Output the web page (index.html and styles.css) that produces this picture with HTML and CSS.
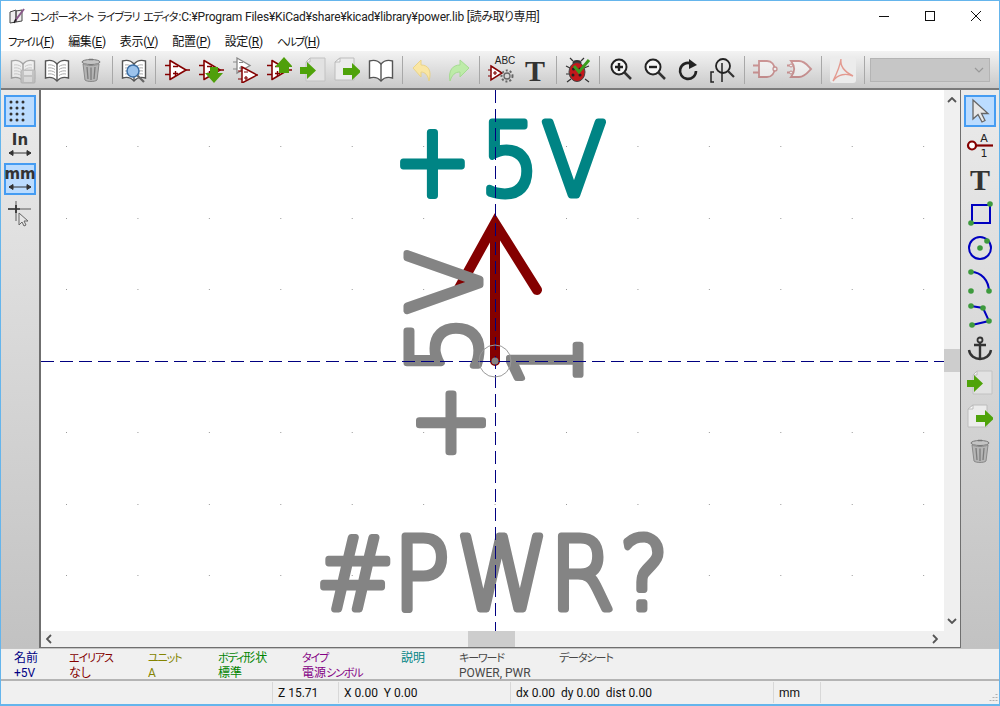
FILE: index.html
```html
<!DOCTYPE html>
<html lang="ja">
<head>
  <meta charset="UTF-8" />
  <title>コンポーネント ライブラリ エディタ</title>
  <link rel="stylesheet" href="styles.css">
</head>
<body>
  <!-- shared toolbar icons -->
  <svg class="defs" width="0" height="0">
    <defs>
      <symbol id="i-book" viewBox="0 0 26 26">
        <path d="M13 7C10 3.5 5 3 1.5 4V21C5 20 10 20.500 13 24C16 20.500 21 20 24.500 21V4C21 3 16 3.500 13 7Z" fill="#fff" stroke="#555" stroke-width="1.4"/>
        <path d="M13 7V24" stroke="#555" stroke-width="1.4"/>
        <path d="M4 8c2.500-.5 5 0 7 1.500M4 11c2.500-.5 5 0 7 1.500M4 14c2.500-.5 5 0 7 1.500M4 17c2.500-.5 5 0 7 1.500M22 8c-2.500-.5-5 0-7 1.500M22 11c-2.500-.5-5 0-7 1.500M22 14c-2.500-.5-5 0-7 1.500M22 17c-2.500-.5-5 0-7 1.500" fill="none" stroke="#aaa"/>
      </symbol>
      <symbol id="i-book-empty" viewBox="0 0 26 26">
        <path d="M13 7C10 3.500 5 3 1.500 4V21C5 20 10 20.500 13 24C16 20.500 21 20 24.500 21V4C21 3 16 3.500 13 7Z" fill="#fff" stroke="#555" stroke-width="1.4"/>
        <path d="M13 7V24" stroke="#555" stroke-width="1.4"/>
      </symbol>
      <symbol id="i-trash" viewBox="0 0 26 26">
        <ellipse cx="13" cy="5" rx="9" ry="2.500" fill="#c4c4c4" stroke="#777"/>
        <path d="M11 2.500h4" stroke="#777" stroke-width="1.500"/>
        <path d="M5 7L7 23C9 25 17 25 19 23L21 7C17 9 9 9 5 7Z" fill="#b4b4b4" stroke="#8a8a8a"/>
        <path d="M9 10L10 22M13 10.500V23M17 10L16 22" stroke="#7c7c7c" stroke-width="1.300"/>
      </symbol>
      <symbol id="i-comp" viewBox="0 0 26 26">
        <path d="M6 3.500L22 13L6 22.500Z" fill="#fff" stroke="#840000" stroke-width="1.600" stroke-linejoin="round"/>
        <path d="M1 8.500H6M1 17.500H6M22 13H26M9 9.500H14M9 16.500H14M11.500 14V19" fill="none" stroke="#840000" stroke-width="1.400"/>
      </symbol>
      <symbol id="i-comp-down" viewBox="0 0 26 26">
        <use href="#i-comp"/>
        <path d="M12 10H20V16H25L16 26L7 16H12Z" fill="#4f9f0b"/>
      </symbol>
      <symbol id="i-comp-up" viewBox="0 0 26 26">
        <use href="#i-comp"/>
        <path d="M13 16V10H9L18 0L27 10H23V16Z" fill="#4f9f0b"/>
      </symbol>
      <symbol id="i-comp-two" viewBox="0 0 26 26">
        <path d="M5 1L18 8.500L5 16Z" fill="#fff" stroke="#888" stroke-width="1.300"/>
        <path d="M1 5H5M1 12H5M7 5.500H11M7 11H11M9 9V13" fill="none" stroke="#888" stroke-width="1.200"/>
        <path d="M10 10L25 18L10 26Z" fill="#fff" stroke="#840000" stroke-width="1.500"/>
        <path d="M6 14H10M6 22H10M25 18H27M12 15H16M12 21H16M14 19V23" fill="none" stroke="#840000" stroke-width="1.200"/>
      </symbol>
      <symbol id="i-import" viewBox="0 0 26 26">
        <path d="M10 1H25V24H6V5Z" fill="#e2e2e2" stroke="#c2c2c2"/>
        <path d="M6 5H10V1Z" fill="#fafafa" stroke="#bbb"/>
        <path d="M-1 10H7V5L16 13.500L7 22V17H-1Z" fill="#4fa30a"/>
      </symbol>
      <symbol id="i-export" viewBox="0 0 26 26">
        <path d="M6 1H20V23H1V5Z" fill="#ececec" stroke="#bcbcbc"/>
        <path d="M1 5H6V1Z" fill="#fafafa" stroke="#bbb"/>
        <path d="M9 11H18V6L27 14.500L18 23V18H9Z" fill="#4fa30a"/>
      </symbol>
      <symbol id="i-text" viewBox="0 0 26 26">
        <text x="13" y="24" text-anchor="middle" class="icon-t">T</text>
      </symbol>
    </defs>
  </svg>

  <div class="window">
    <header class="titlebar">
      <svg class="app-icon" viewBox="0 0 16 16">
        <path d="M1 4L7 2V14L1 15ZM7 3L13 2V13L7 14Z" fill="#eee" stroke="#444"/>
        <path d="M6 13L15 1" stroke="#8a5a8a" stroke-width="2"/>
        <path d="M5 15L7 11" stroke="#222" stroke-width="1.500"/>
      </svg>
      <span class="title-text"><span class="ja">コンポーネント ライブラリ エディタ</span>:C:¥Program Files¥KiCad¥share¥kicad¥library¥power.lib [<span class="jk">読み取り専用</span>]</span>
      <div class="win-buttons">
        <svg class="win-btn" viewBox="0 0 46 30"><path d="M18 15.500H28" stroke="#111"/></svg>
        <svg class="win-btn" viewBox="0 0 46 30"><rect x="18.500" y="10.500" width="9" height="9" fill="none" stroke="#111"/></svg>
        <svg class="win-btn" viewBox="0 0 46 30"><path d="M18 10L28 20M28 10L18 20" stroke="#111"/></svg>
      </div>
    </header>

    <nav class="menubar">
      <span class="menu-item"><span class="ja">ファイル</span>(<u>F</u>)</span>
      <span class="menu-item">編集(<u>E</u>)</span>
      <span class="menu-item">表示(<u>V</u>)</span>
      <span class="menu-item">配置(<u>P</u>)</span>
      <span class="menu-item">設定(<u>R</u>)</span>
      <span class="menu-item"><span class="ja">ヘルプ</span>(<u>H</u>)</span>
    </nav>

    <div class="toolbar">
      <span class="tool ghost">
        <svg class="icon" viewBox="0 0 26 26"><use href="#i-book"/><rect x="11" y="13" width="14" height="13" rx="1" fill="#aaa" stroke="#888"/><rect x="14" y="14" width="8" height="4" fill="#eee"/><rect x="14" y="20" width="8" height="5" fill="#ddd"/></svg>
      </span>
      <span class="tool"><svg class="icon"><use href="#i-book"/></svg></span>
      <span class="tool"><svg class="icon"><use href="#i-trash"/></svg></span>
      <span class="sep"></span>
      <span class="tool">
        <svg class="icon" viewBox="0 0 26 26"><use href="#i-book"/><circle cx="12" cy="14" r="6" fill="#9cc3ec" stroke="#3a6ea5" stroke-width="1.500"/><path d="M16.500 18.500L23 25" stroke="#666" stroke-width="2.200"/></svg>
      </span>
      <span class="sep"></span>
      <span class="tool"><svg class="icon"><use href="#i-comp"/></svg></span>
      <span class="tool"><svg class="icon"><use href="#i-comp-down"/></svg></span>
      <span class="tool"><svg class="icon"><use href="#i-comp-two"/></svg></span>
      <span class="tool"><svg class="icon"><use href="#i-comp-up"/></svg></span>
      <span class="tool"><svg class="icon"><use href="#i-import"/></svg></span>
      <span class="tool"><svg class="icon"><use href="#i-export"/></svg></span>
      <span class="tool"><svg class="icon"><use href="#i-book-empty"/></svg></span>
      <span class="sep"></span>
      <span class="tool soft">
        <svg class="icon" viewBox="0 0 26 26"><path d="M2 11L10 3V8C17 8 21 13 18 24C17 18 14 15 10 15V20Z" fill="#ffe89a" stroke="#ecd27a"/></svg>
      </span>
      <span class="tool soft">
        <svg class="icon" viewBox="0 0 26 26"><path d="M24 11L15 3V8C8 8 3 13 5 24C7 18 10 15 15 15V20Z" fill="#b8eea0" stroke="#9cdc84"/></svg>
      </span>
      <span class="sep"></span>
      <span class="tool">
        <svg class="icon" viewBox="0 0 26 26">
          <path d="M3 9L14 16L3 23Z" fill="#fff" stroke="#840000" stroke-width="1.500"/>
          <path d="M0 13H3M0 19H3M5 16H9M7 14V18" stroke="#840000" stroke-width="1.200"/>
          <text x="17" y="7" text-anchor="middle" class="icon-abc">ABC</text>
          <circle cx="19" cy="19" r="3" fill="none" stroke="#666" stroke-width="1.300"/>
          <circle cx="19" cy="19" r="5.500" fill="none" stroke="#666" stroke-width="2" stroke-dasharray="2 2"/>
        </svg>
      </span>
      <span class="tool"><svg class="icon"><use href="#i-text"/></svg></span>
      <span class="sep"></span>
      <span class="tool">
        <svg class="icon" viewBox="0 0 26 26">
          <path d="M8 4L5 1M16 4L19 1M5 11L1 9M5 17L1 17M6 22L2 25M19 11L24 9M20 22L24 25" stroke="#333" stroke-width="1.200"/>
          <ellipse cx="12" cy="6" rx="4.500" ry="3" fill="#333"/>
          <ellipse cx="12" cy="15" rx="8" ry="9.500" fill="#c3171b" stroke="#444"/>
          <circle cx="8.500" cy="12" r="1.500" fill="#222"/><circle cx="15" cy="12" r="1.500" fill="#222"/><circle cx="8" cy="18" r="1.500" fill="#222"/><circle cx="15" cy="18" r="1.500" fill="#222"/>
          <path d="M9 9L14 15L24 3" fill="none" stroke="#3c9d1e" stroke-width="3"/>
        </svg>
      </span>
      <span class="sep"></span>
      <span class="tool">
        <svg class="icon" viewBox="0 0 26 26"><circle cx="11" cy="10" r="7.500" fill="#f5f5f5" stroke="#222" stroke-width="2"/><path d="M16.500 15.500L23 22" stroke="#333" stroke-width="2.500"/><path d="M7 10H15M11 6V14" stroke="#222" stroke-width="2.400"/></svg>
      </span>
      <span class="tool">
        <svg class="icon" viewBox="0 0 26 26"><circle cx="11" cy="10" r="7.500" fill="#f5f5f5" stroke="#222" stroke-width="2"/><path d="M16.500 15.500L23 22" stroke="#333" stroke-width="2.500"/><path d="M7 10H15" stroke="#222" stroke-width="2.400"/></svg>
      </span>
      <span class="tool">
        <svg class="icon" viewBox="0 0 26 26"><path d="M20 14A8 8 0 1 1 15 6.500" fill="none" stroke="#222" stroke-width="2.600"/><path d="M13 2L21 8L13 12Z" fill="#222"/></svg>
      </span>
      <span class="tool">
        <svg class="icon" viewBox="0 0 26 26"><circle cx="13" cy="9" r="7" fill="none" stroke="#222" stroke-width="1.800"/><path d="M18 14L24 20" stroke="#333" stroke-width="2.200"/><path d="M4 15H1V25H4M12 6V25" fill="none" stroke="#222" stroke-width="1.500"/></svg>
      </span>
      <span class="sep"></span>
      <span class="tool ghost">
        <svg class="icon" viewBox="0 0 26 26"><path d="M6 4H14C24 4 24 20 14 20H6ZM0 8.500H6M0 15.500H6" fill="#fff" stroke="#a33" stroke-width="1.800"/><circle cx="22" cy="12" r="2" fill="#fff" stroke="#a33" stroke-width="1.300"/></svg>
      </span>
      <span class="tool ghost">
        <svg class="icon" viewBox="0 0 26 26"><path d="M4 4H12C18 4 21 9 24 12C21 15 18 20 12 20H4C8 15 8 9 4 4ZM0 8.500H6M0 15.500H6" fill="#fff" stroke="#a33" stroke-width="1.800"/><circle cx="4" cy="8.500" r="1.500" fill="#fff" stroke="#a33"/><circle cx="4" cy="15.500" r="1.500" fill="#fff" stroke="#a33"/></svg>
      </span>
      <span class="sep"></span>
      <span class="tool pdf">
        <svg class="icon" viewBox="0 0 26 26"><rect x="0" y="0" width="26" height="26" rx="3" fill="#ececec"/><path d="M11 2C10 8 13 14 23 19C16 16 8 17 3 24C7 16 10 10 11 2Z" fill="none" stroke="#e39a90" stroke-width="1.400"/></svg>
      </span>
      <span class="sep"></span>
      <span class="combo">
        <svg class="combo-arrow" viewBox="0 0 10 6"><path d="M1 1L5 5L9 1" fill="none" stroke="#999" stroke-width="1.200"/></svg>
      </span>
    </div>

    <main class="workspace">
      <aside class="sidebar sidebar-left">
        <span class="side-tool active">
          <svg class="icon" viewBox="0 0 26 26"><path d="M4 4h18M4 10h18M4 16h18M4 22h18" stroke="#333" stroke-width="3" stroke-linecap="round" stroke-dasharray="0 6"/></svg>
        </span>
        <span class="side-tool">
          <svg class="icon" viewBox="0 0 26 26"><text x="13" y="13" text-anchor="middle" class="icon-unit">In</text><path d="M2 21H24M2 21L6 18.500V23.500ZM24 21L20 18.500V23.500Z" stroke="#333" fill="#333"/></svg>
        </span>
        <span class="side-tool active">
          <svg class="icon" viewBox="0 0 26 26"><text x="13" y="13" text-anchor="middle" class="icon-unit">mm</text><path d="M2 21H24M2 21L6 18.500V23.500ZM24 21L20 18.500V23.500Z" stroke="#333" fill="#333"/></svg>
        </span>
        <span class="side-tool">
          <svg class="icon" viewBox="0 0 26 26"><path d="M1 9H13" stroke="#222" stroke-width="1.500"/><path d="M13 9H24M9 1V21" stroke="#888" stroke-width="1.500"/><path d="M9 5V13" stroke="#222" stroke-width="1.500"/><path d="M12 13V25L15 22L17 26L19 25L17 21H21Z" fill="#e6e6e6" stroke="#666"/></svg>
        </span>
      </aside>

      <section class="canvas-frame">
        <svg class="canvas" viewBox="41 90 903 541">
          <!-- grid points -->
          <g class="grid-dots">
            <line x1="66" x2="944" y1="146.500" y2="146.500"/>
            <line x1="66" x2="944" y1="218.500" y2="218.500"/>
            <line x1="66" x2="944" y1="289.500" y2="289.500"/>
            <line x1="66" x2="944" y1="361.500" y2="361.500"/>
            <line x1="66" x2="944" y1="432.500" y2="432.500"/>
            <line x1="66" x2="944" y1="504.500" y2="504.500"/>
            <line x1="66" x2="944" y1="575.500" y2="575.500"/>
          </g>
          <path class="pin" d="M495 361V223M458 290L495 223L537 290"/>
          <text class="stroke-text teal" x="423 516.500 583" y="0" transform="translate(0 194.500) scale(.93 1)">+5V</text>
          <text class="stroke-text gray" x="9 102.400 168" y="2 0 0" transform="translate(479.500 470) rotate(-90) scale(.93 1)">+5V</text>
          <text class="stroke-text gray pin-num" x="0" y="0" transform="translate(579.500 387) rotate(-90) scale(.85 1)">1</text>
          <text class="stroke-text gray" x="340 423 491 591 666" y="0" transform="translate(0 608.500) scale(.93 1)">#PWR?</text>
          <path class="crosshair" d="M495.500 90V631M41 361.500H944"/>
          <circle class="origin-ring" cx="495" cy="361" r="16"/>
          <circle class="origin-dot" cx="495" cy="361" r="3.500"/>
        </svg>
        <div class="vbar">
          <svg class="arrow" viewBox="0 0 10 6"><path d="M1 5L5 1L9 5" fill="none" stroke="#555" stroke-width="1.800"/></svg>
          <span class="vthumb"></span>
          <svg class="arrow" viewBox="0 0 10 6"><path d="M1 1L5 5L9 1" fill="none" stroke="#555" stroke-width="1.800"/></svg>
        </div>
        <div class="hbar">
          <svg class="arrow-h" viewBox="0 0 6 10"><path d="M5 1L1 5L5 9" fill="none" stroke="#555" stroke-width="1.800"/></svg>
          <span class="hthumb"></span>
          <svg class="arrow-h" viewBox="0 0 6 10"><path d="M1 1L5 5L1 9" fill="none" stroke="#555" stroke-width="1.800"/></svg>
        </div>
        <div class="corner"></div>
      </section>

      <aside class="sidebar sidebar-right">
        <span class="side-tool active">
          <svg class="icon" viewBox="0 0 26 26"><path d="M6 2V21L11 16.500L15 24L18 22.500L14.500 15.500H21Z" fill="#e8e8e8" stroke="#666" stroke-width="1.300"/></svg>
        </span>
        <span class="side-tool">
          <svg class="icon" viewBox="0 0 26 26"><circle cx="5" cy="13.500" r="4" fill="#fff" stroke="#840000" stroke-width="2.200"/><path d="M9 13.500H26" stroke="#840000" stroke-width="2.200"/><text x="17" y="10" text-anchor="middle" class="icon-pin">A</text><text x="17" y="25" text-anchor="middle" class="icon-pin">1</text></svg>
        </span>
        <span class="side-tool"><svg class="icon"><use href="#i-text"/></svg></span>
        <span class="side-tool">
          <svg class="icon" viewBox="0 0 26 26"><rect x="5" y="5" width="18" height="18" fill="none" stroke="#0000c0" stroke-width="2"/><circle cx="23" cy="4" r="2.800" fill="#3d9a3d"/><circle cx="4" cy="23" r="2.800" fill="#3d9a3d"/></svg>
        </span>
        <span class="side-tool">
          <svg class="icon" viewBox="0 0 26 26"><circle cx="13" cy="14" r="11" fill="none" stroke="#0000c0" stroke-width="2"/><circle cx="13" cy="14" r="2.800" fill="#3d9a3d"/><circle cx="20" cy="7" r="2.800" fill="#3d9a3d"/></svg>
        </span>
        <span class="side-tool">
          <svg class="icon" viewBox="0 0 26 26"><path d="M4 4C14 4 22 12 22 24" fill="none" stroke="#0000c0" stroke-width="2"/><circle cx="4" cy="4" r="2.800" fill="#3d9a3d"/><circle cx="22" cy="23" r="2.800" fill="#3d9a3d"/><circle cx="4" cy="23" r="2.800" fill="#3d9a3d"/></svg>
        </span>
        <span class="side-tool">
          <svg class="icon" viewBox="0 0 26 26"><path d="M4 4L16 6L22 19L5 23" fill="none" stroke="#0000c0" stroke-width="2"/><circle cx="4" cy="4" r="2.800" fill="#3d9a3d"/><circle cx="16" cy="6" r="2.800" fill="#3d9a3d"/><circle cx="22" cy="19" r="2.800" fill="#3d9a3d"/><circle cx="5" cy="23" r="2.800" fill="#3d9a3d"/></svg>
        </span>
        <span class="side-tool">
          <svg class="icon" viewBox="0 0 26 26"><circle cx="13" cy="4" r="2.500" fill="none" stroke="#333" stroke-width="1.800"/><path d="M7 9H19M13 6V23M2 14C3 20 8 23 13 23C18 23 23 20 24 14" fill="none" stroke="#333" stroke-width="2.400"/></svg>
        </span>
        <span class="side-tool"><svg class="icon"><use href="#i-import"/></svg></span>
        <span class="side-tool"><svg class="icon"><use href="#i-export"/></svg></span>
        <span class="side-tool"><svg class="icon"><use href="#i-trash"/></svg></span>
      </aside>
    </main>

    <section class="msg-panel">
      <div class="msg msg-name"><span>名前</span><span>+5V</span></div>
      <div class="msg msg-alias"><span class="ja">エイリアス</span><span>なし</span></div>
      <div class="msg msg-unit"><span class="ja">ユニット</span><span>A</span></div>
      <div class="msg msg-body"><span><span class="ja">ボディ</span>形状</span><span>標準</span></div>
      <div class="msg msg-type"><span class="ja">タイプ</span><span>電源<span class="ja">シンボル</span></span></div>
      <div class="msg msg-desc"><span>説明</span><span></span></div>
      <div class="msg msg-keys"><span class="ja">キーワード</span><span>POWER, PWR</span></div>
      <div class="msg msg-sheet"><span class="ja">データシート</span><span></span></div>
    </section>

    <footer class="statusbar">
      <span class="cell cell-main"></span>
      <span class="cell cell-zoom">Z 15.71</span>
      <span class="cell cell-pos">X 0.00&nbsp; Y 0.00</span>
      <span class="cell cell-delta">dx 0.00&nbsp; dy 0.00&nbsp; dist 0.00</span>
      <span class="cell cell-unit">mm</span>
      <span class="cell cell-rest">
        <svg class="grip" viewBox="0 0 9 9"><path d="M7.500 0V1M4.500 3V4M7.500 3V4M1.500 6V7M4.500 6V7M7.500 6V7" stroke="#b0b0b0" stroke-width="2"/></svg>
      </span>
    </footer>
  </div>
</body>
</html>
```

FILE: styles.css
```css
* {
  box-sizing: border-box;
}

body {
  margin: 0;
  background: #fff;
  font-family: "Roboto", "Noto Sans CJK JP", sans-serif;
  font-feature-settings: "palt";
  font-size: 12px;
  color: #111;
  overflow: hidden;
}

/* kana is set narrower than kanji in the reference */
.ja {
  font-size: 11px;
  letter-spacing: -1.100px;
}

.jk {
  letter-spacing: -0.500px;
}

.defs {
  position: absolute;
}

.window {
  width: 1000px;
  height: 706px;
  display: flex;
  flex-direction: column;
  border: 1px solid #65b5ec;
  border-bottom-width: 2px;
  background: #fff;
}

/* title bar */
.titlebar {
  height: 29px;
  display: flex;
  align-items: center;
  padding-left: 8px;
  flex: none;
}

.app-icon {
  width: 16px;
  height: 16px;
  margin-right: 5px;
}

.title-text {
  flex: 1;
  white-space: nowrap;
  font-size: 12px;
  letter-spacing: -0.200px;
  color: #222;
}

.title-text .ja {
  letter-spacing: -1px;
  word-spacing: 2px;
  margin-right: 1px;
}

.win-buttons {
  display: flex;
  height: 29px;
}

.win-btn {
  width: 46px;
  height: 30px;
}

/* menu */
.menubar {
  height: 21px;
  display: flex;
  align-items: center;
  padding-left: 7px;
  flex: none;
  letter-spacing: -0.300px;
}

.menu-item {
  margin-right: 14px;
  white-space: nowrap;
}

.menu-item .ja {
  letter-spacing: -1.500px;
}

.menu-item u {
  text-underline-offset: 1px;
}

/* top toolbar */
.toolbar {
  height: 39px;
  flex: none;
  display: flex;
  align-items: center;
  padding: 2px 0 1px 5px;
  background: linear-gradient(#f3f3f3, #c9c9c9);
  border-bottom: 2px solid #7a7a7a;
}

.tool {
  width: 34px;
  height: 32px;
  display: flex;
  align-items: center;
  justify-content: center;
  flex: none;
}

.icon {
  width: 26px;
  height: 26px;
  overflow: visible;
}

.ghost {
  opacity: 0.45;
}

.soft {
  opacity: 0.85;
}

.sep {
  width: 1px;
  height: 28px;
  margin: 0 4px;
  background: #a8a8a8;
  flex: none;
}

.combo {
  width: 120px;
  height: 24px;
  margin-left: 1px;
  background: #c6c6c6;
  border: 1px solid #b4b4b4;
  display: flex;
  align-items: center;
  justify-content: flex-end;
  padding-right: 5px;
}

.combo-arrow {
  width: 10px;
  height: 6px;
}

/* icon text */
.icon-t {
  font-family: "Liberation Serif", serif;
  font-weight: 700;
  font-size: 30px;
  fill: #333;
}

.icon-abc {
  font-family: "Liberation Sans", sans-serif;
  font-size: 10px;
  fill: #222;
}

.icon-unit {
  font-family: "DejaVu Sans", sans-serif;
  font-weight: 700;
  font-size: 15px;
  fill: #333;
}

.icon-pin {
  font-family: "DejaVu Sans", sans-serif;
  font-size: 11px;
  fill: #222;
}

/* middle */
.workspace {
  flex: 1;
  min-height: 0;
  display: flex;
}

.sidebar {
  width: 38px;
  flex: none;
  display: flex;
  flex-direction: column;
  align-items: center;
  padding-top: 5px;
  background: linear-gradient(#ebebeb, #c2c2c2);
}

.side-tool {
  width: 32px;
  height: 32px;
  margin-bottom: 2px;
  flex: none;
  display: flex;
  align-items: center;
  justify-content: center;
  border: 1px solid transparent;
}

.side-tool.active {
  background: #bbdcff;
  border: 2px solid #459cf2;
}

.canvas-frame {
  flex: 1;
  min-width: 0;
  display: grid;
  grid-template-columns: 1fr 16px;
  grid-template-rows: 1fr 16px;
  border-left: 2px solid #6f6f6f;
  border-right: 2px solid #6f6f6f;
  border-bottom: 2px solid #6f6f6f;
}

.canvas {
  width: 903px;
  height: 541px;
  display: block;
  background: #fff;
}

.grid-dots line {
  stroke: #9a9a9a;
  stroke-width: 1;
  stroke-dasharray: 1 70.430;
}

.pin {
  fill: none;
  stroke: #840000;
  stroke-width: 10;
  stroke-linejoin: miter;
  stroke-linecap: round;
}

.stroke-text {
  font-family: "DejaVu Sans", sans-serif;
  font-weight: 200;
  font-size: 100px;
  stroke-width: 7;
  stroke-linejoin: round;
  stroke-linecap: round;
}

.teal {
  fill: #008484;
  stroke: #008484;
}

.gray {
  fill: #848484;
  stroke: #848484;
}

.pin-num {
  font-size: 96px;
}

.crosshair {
  fill: none;
  stroke: #000080;
  stroke-width: 1;
  stroke-dasharray: 13 6;
}

.origin-ring {
  fill: none;
  stroke: #9a9a9a;
  stroke-width: 1;
}

.origin-dot {
  fill: #848484;
}

/* scrollbars */
.vbar,
.hbar,
.corner {
  background: #f0f0f0;
}

.vbar {
  position: relative;
  display: flex;
  flex-direction: column;
  align-items: center;
  justify-content: space-between;
  padding: 7px 0;
}

.hbar {
  position: relative;
  display: flex;
  align-items: center;
  justify-content: space-between;
  padding: 0 6px 0 5px;
}

.arrow {
  width: 10px;
  height: 6px;
}

.arrow-h {
  width: 6px;
  height: 10px;
}

.vthumb {
  position: absolute;
  left: 0;
  top: 259px;
  width: 16px;
  height: 23px;
  background: #cdcdcd;
}

.hthumb {
  position: absolute;
  top: 0;
  left: 427px;
  width: 47px;
  height: 16px;
  background: #cdcdcd;
}

/* message panel */
.msg-panel {
  height: 33px;
  flex: none;
  display: flex;
  padding: 2px 0 0 13px;
  background: #f0f0f0;
  border-top: 1px solid #c4c4c4;
  border-bottom: 2px solid #b4b4b4;
}

.msg {
  display: flex;
  flex-direction: column;
  line-height: 15px;
  white-space: nowrap;
}

.msg-name { width: 55px; color: #000084; }
.msg-alias { width: 79px; color: #840000; }
.msg-unit { width: 70px; color: #848400; }
.msg-body { width: 84px; color: #008400; }
.msg-type { width: 99px; color: #840084; }
.msg-desc { width: 58px; color: #008484; }
.msg-keys { width: 100px; color: #484848; }
.msg-sheet { color: #484848; }

/* status bar */
.statusbar {
  height: 23px;
  flex: none;
  display: flex;
  background: #f0f0f0;
  padding: 1px 0;
}

.cell {
  display: flex;
  align-items: center;
  padding-left: 5px;
  border-right: 1px solid #d8d8d8;
  white-space: nowrap;
}

.cell-main { width: 272px; }
.cell-zoom { width: 66px; }
.cell-pos { width: 172px; }
.cell-delta { width: 263px; }
.cell-unit { width: 47px; }

.cell-rest {
  flex: 1;
  border-right: none;
  justify-content: flex-end;
  align-items: flex-end;
}

.grip {
  width: 9px;
  height: 9px;
  margin-right: 1px;
}
```
